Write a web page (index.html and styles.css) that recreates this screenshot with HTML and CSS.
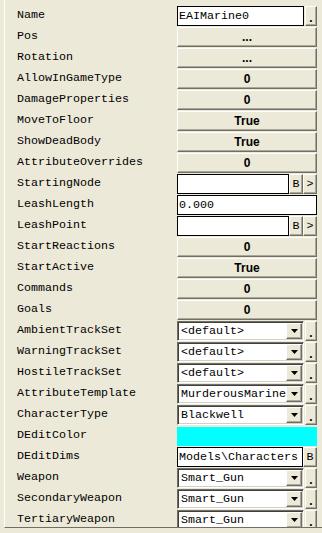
FILE: index.html
```html
<!DOCTYPE html>
<html lang="en">
<head>
  <meta charset="UTF-8">
  <title>Properties</title>
  <link rel="stylesheet" href="styles.css">
</head>
<body>
  <div class="panel">
    <div class="grid">
      <span class="label">Name</span>
      <div class="value"><div class="edit">EAIMarine0</div><button class="btn dot">.</button></div>

      <span class="label">Pos</span>
      <button class="btn wide">...</button>
      <span class="label">Rotation</span>
      <button class="btn wide">...</button>
      <span class="label">AllowInGameType</span>
      <button class="btn wide">0</button>
      <span class="label">DamageProperties</span>
      <button class="btn wide">0</button>
      <span class="label">MoveToFloor</span>
      <button class="btn wide">True</button>
      <span class="label">ShowDeadBody</span>
      <button class="btn wide">True</button>
      <span class="label">AttributeOverrides</span>
      <button class="btn wide">0</button>

      <span class="label">StartingNode</span>
      <div class="value tight"><div class="edit"></div><button class="btn mono">B</button><button class="btn mono">&gt;</button></div>
      <span class="label">LeashLength</span>
      <div class="value"><div class="edit">0.000</div></div>
      <span class="label">LeashPoint</span>
      <div class="value tight"><div class="edit"></div><button class="btn mono">B</button><button class="btn mono">&gt;</button></div>

      <span class="label">StartReactions</span>
      <button class="btn wide">0</button>
      <span class="label">StartActive</span>
      <button class="btn wide">True</button>
      <span class="label">Commands</span>
      <button class="btn wide">0</button>
      <span class="label">Goals</span>
      <button class="btn wide">0</button>

      <span class="label">AmbientTrackSet</span>
      <div class="value"><div class="combo"><span class="text">&lt;default&gt;</span><span class="arrow"><svg width="7" height="4" viewBox="0 0 7 4"><polygon points="0,0 7,0 3.5,4" fill="#000"/></svg></span></div><button class="btn dot">.</button></div>
      <span class="label">WarningTrackSet</span>
      <div class="value"><div class="combo"><span class="text">&lt;default&gt;</span><span class="arrow"><svg width="7" height="4" viewBox="0 0 7 4"><polygon points="0,0 7,0 3.5,4" fill="#000"/></svg></span></div><button class="btn dot">.</button></div>
      <span class="label">HostileTrackSet</span>
      <div class="value"><div class="combo"><span class="text">&lt;default&gt;</span><span class="arrow"><svg width="7" height="4" viewBox="0 0 7 4"><polygon points="0,0 7,0 3.5,4" fill="#000"/></svg></span></div><button class="btn dot">.</button></div>
      <span class="label">AttributeTemplate</span>
      <div class="value"><div class="combo"><span class="text">MurderousMarine</span><span class="arrow"><svg width="7" height="4" viewBox="0 0 7 4"><polygon points="0,0 7,0 3.5,4" fill="#000"/></svg></span></div><button class="btn dot">.</button></div>
      <span class="label">CharacterType</span>
      <div class="value"><div class="combo"><span class="text">Blackwell</span><span class="arrow"><svg width="7" height="4" viewBox="0 0 7 4"><polygon points="0,0 7,0 3.5,4" fill="#000"/></svg></span></div><button class="btn dot">.</button></div>

      <span class="label">DEditColor</span>
      <div class="value"><div class="swatch"></div></div>
      <span class="label">DEditDims</span>
      <div class="value tight"><div class="edit">Models\Characters</div><button class="btn mono">B</button></div>

      <span class="label">Weapon</span>
      <div class="value"><div class="combo"><span class="text">Smart_Gun</span><span class="arrow"><svg width="7" height="4" viewBox="0 0 7 4"><polygon points="0,0 7,0 3.5,4" fill="#000"/></svg></span></div><button class="btn dot">.</button></div>
      <span class="label">SecondaryWeapon</span>
      <div class="value"><div class="combo"><span class="text">Smart_Gun</span><span class="arrow"><svg width="7" height="4" viewBox="0 0 7 4"><polygon points="0,0 7,0 3.5,4" fill="#000"/></svg></span></div><button class="btn dot">.</button></div>
      <span class="label">TertiaryWeapon</span>
      <div class="value"><div class="combo"><span class="text">Smart_Gun</span><span class="arrow"><svg width="7" height="4" viewBox="0 0 7 4"><polygon points="0,0 7,0 3.5,4" fill="#000"/></svg></span></div><button class="btn dot">.</button></div>
    </div>
  </div>
</body>
</html>
```

FILE: styles.css
```css
* { box-sizing: border-box; }
body {
  margin: 0;
  background: #ece9d8;
  font-family: "Liberation Mono", "Courier New", monospace;
  font-size: 11.67px;
  color: #000;
}
.panel {
  margin-left: 4px;
  height: 528px;
  padding-top: 6px;
  border-left: 1px solid #fff;
  border-bottom: 1px solid #716f64;
  overflow: hidden;
}
.grid {
  display: grid;
  grid-template-columns: 172px 140px;
  grid-auto-rows: 20px;
  row-gap: 1px;
}
.label {
  padding-left: 12px;
  line-height: 19px;
  white-space: nowrap;
}
.value {
  display: flex;
  gap: 1px;
  height: 20px;
}
.value.tight { gap: 0; }
.btn {
  margin: 0;
  padding: 0;
  height: 20px;
  background: #ece9d8;
  border: 1px solid;
  border-color: #fff #716f64 #716f64 #fff;
  box-shadow: inset -1px -1px #aca899;
  font-family: "Liberation Sans", Arial, sans-serif;
  font-weight: bold;
  font-size: 12px;
  color: #000;
  line-height: 17px;
}
.btn.wide { width: 140px; }
.btn.dot {
  width: 12px;
  flex: none;
  line-height: 22px;
  font-size: 12px;
}
.btn.mono {
  width: 14px;
  flex: none;
  font-family: "Liberation Mono", "Courier New", monospace;
  font-weight: normal;
  font-size: 11.67px;
}
.edit {
  flex: 1;
  height: 20px;
  background: #fff;
  border: 1px solid #000;
  padding-left: 1px;
  line-height: 18px;
  white-space: nowrap;
  overflow: hidden;
}
.combo {
  flex: none;
  width: 127px;
  height: 20px;
  display: flex;
  background: #fff;
  border: 1px solid;
  border-color: #716f64 #fff #fff #716f64;
  box-shadow: inset 1px 1px #404040, inset -1px -1px #d4d0c8;
  padding: 1px;
}
.combo .text {
  flex: 1;
  padding-left: 2px;
  line-height: 16px;
  white-space: nowrap;
  overflow: hidden;
}
.combo .arrow {
  width: 16px;
  flex: none;
  display: flex;
  align-items: center;
  justify-content: center;
  background: #ece9d8;
  border: 1px solid;
  border-color: #fff #716f64 #716f64 #fff;
  box-shadow: inset -1px -1px #aca899;
}
.swatch {
  width: 140px;
  height: 19px;
  margin-top: 1px;
  background: #00ffff;
}
```
